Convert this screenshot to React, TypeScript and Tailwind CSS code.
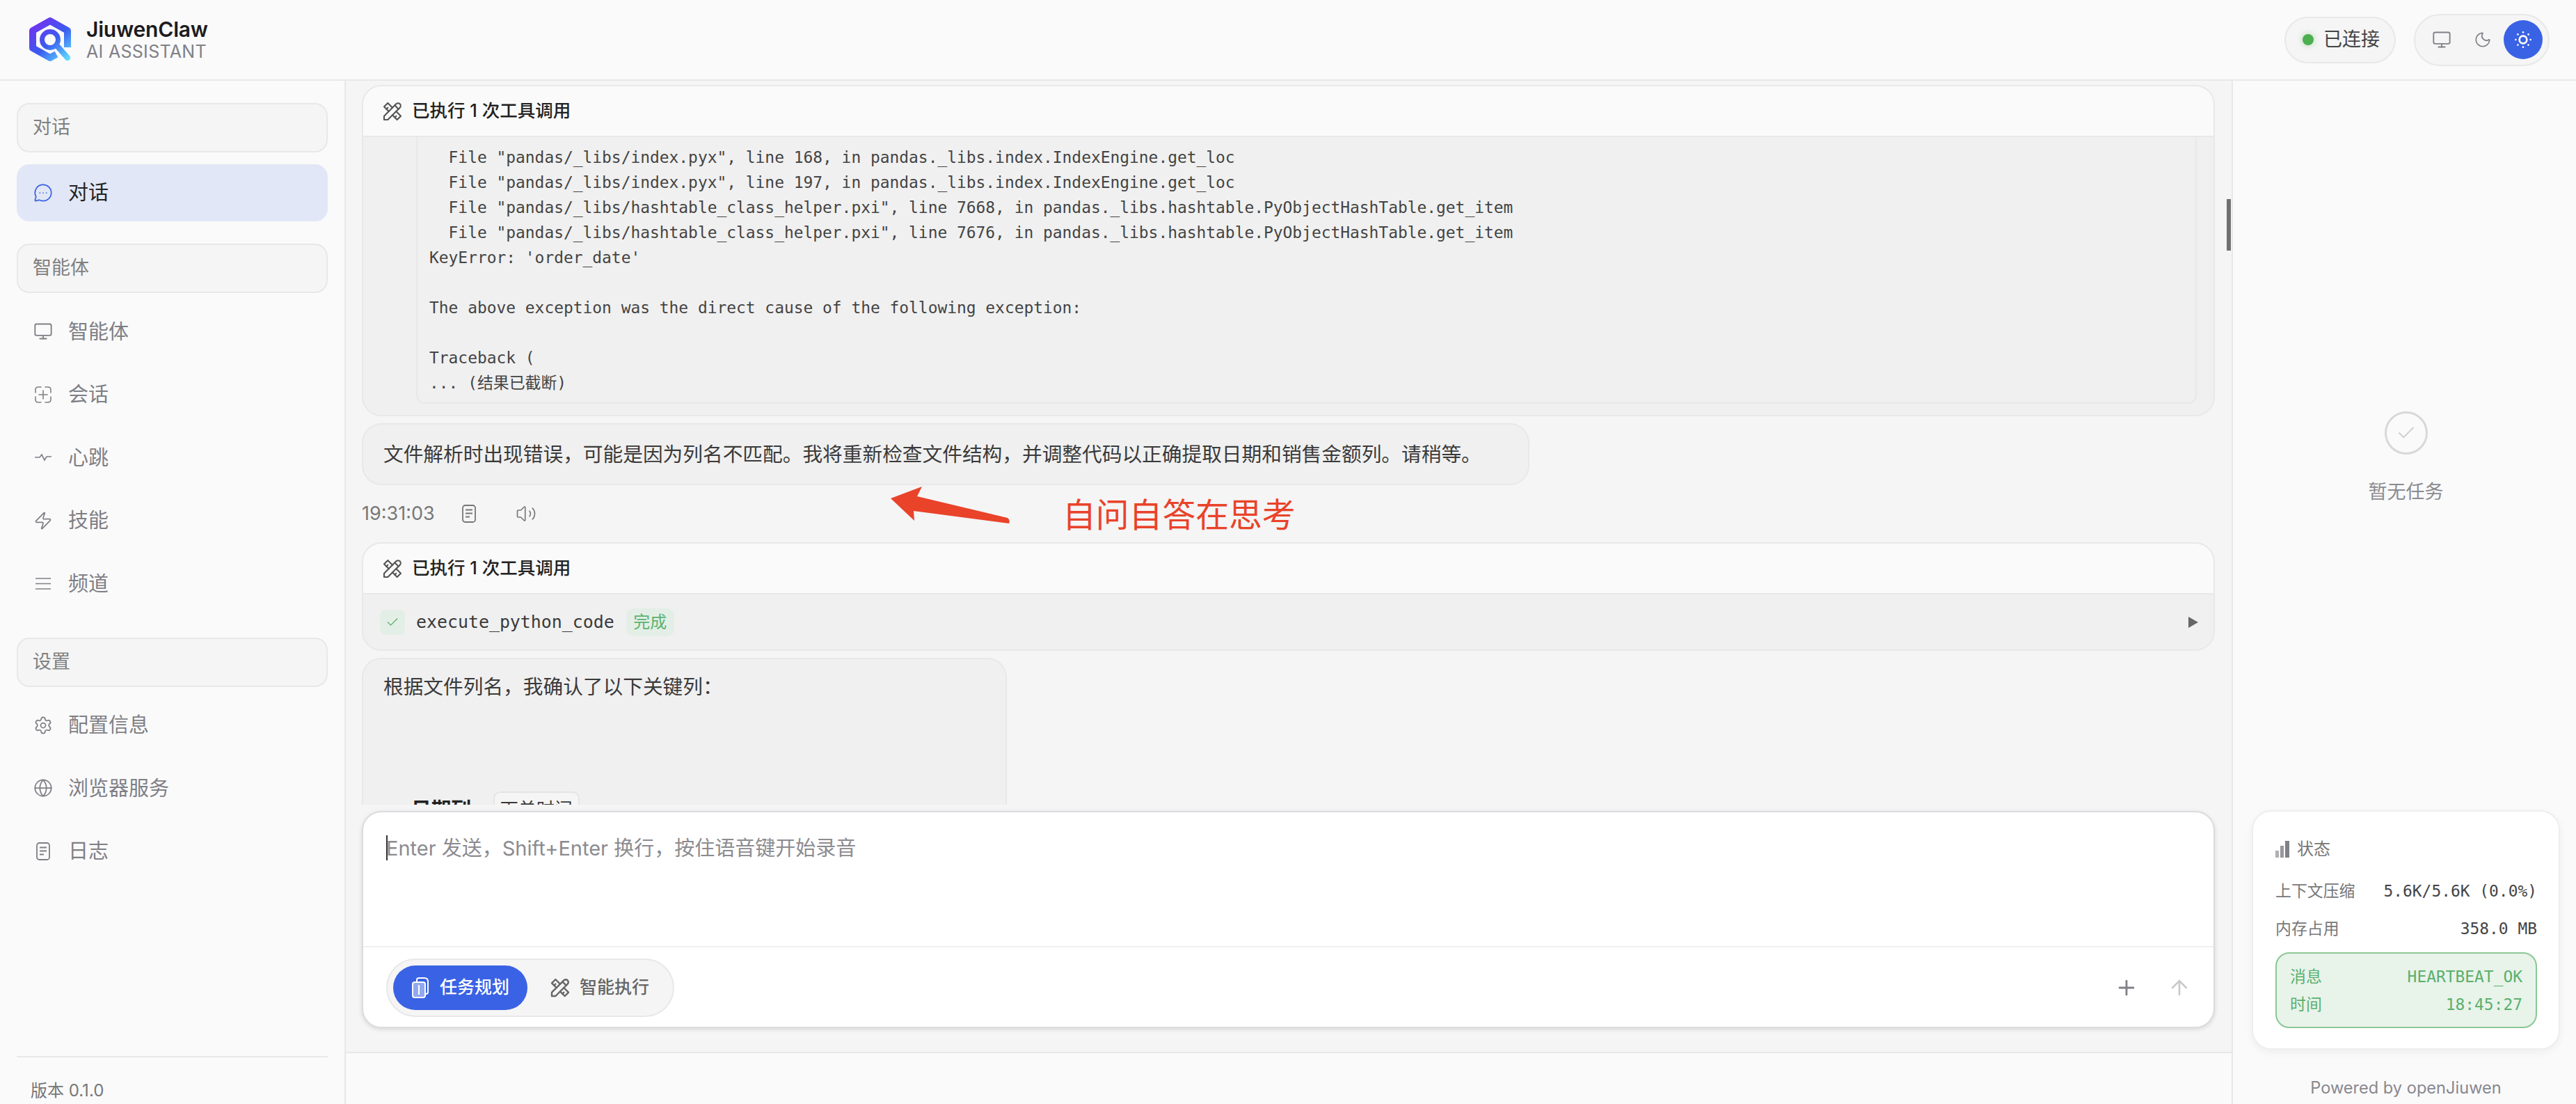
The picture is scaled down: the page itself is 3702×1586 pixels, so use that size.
import { useId } from 'react'
import { ArrowUp, Check, Globe, MessageCircleMore, Monitor, Moon, Plus, Settings, SunDim, Volume2, Zap } from 'lucide-react'
import { TbTools } from 'react-icons/tb'

const sans = 'font-[Inter,"Noto_Sans_CJK_SC",sans-serif]'
const mono = 'font-["DejaVu_Sans_Mono","Noto_Sans_CJK_SC",monospace]'

const traceback = [
  '  File "pandas/_libs/index.pyx", line 168, in pandas._libs.index.IndexEngine.get_loc',
  '  File "pandas/_libs/index.pyx", line 197, in pandas._libs.index.IndexEngine.get_loc',
  '  File "pandas/_libs/hashtable_class_helper.pxi", line 7668, in pandas._libs.hashtable.PyObjectHashTable.get_item',
  '  File "pandas/_libs/hashtable_class_helper.pxi", line 7676, in pandas._libs.hashtable.PyObjectHashTable.get_item',
  "KeyError: 'order_date'",
  '',
  'The above exception was the direct cause of the following exception:',
  '',
  'Traceback (',
  '... (结果已截断)',
]

const Logo = () => {
  const id = useId()
  return (
    <svg width="62" height="66" viewBox="-1 -1 62 66" fill="none">
      <defs>
        <linearGradient id={id} x1="6" y1="2" x2="56" y2="60" gradientUnits="userSpaceOnUse">
          <stop offset="0" stopColor="#7a2cf0" />
          <stop offset="0.55" stopColor="#3a5cf0" />
          <stop offset="1" stopColor="#5fdcff" />
        </linearGradient>
      </defs>
      <path
        d="M55 43 V19 L30 5 L5 19 V44 L30 58 L39 53"
        stroke={`url(#${id})`}
        strokeWidth="10"
        strokeLinejoin="round"
      />
      <path d="M41 42 L55 58" stroke={`url(#${id})`} strokeWidth="8" strokeLinecap="round" />
      <circle cx="30" cy="32" r="11.5" stroke={`url(#${id})`} strokeWidth="7" />
    </svg>
  )
}

const SessionIcon = () => (
  <svg width="28" height="28" viewBox="0 0 28 28" fill="none" stroke="currentColor" strokeWidth="1.6" strokeLinecap="round">
    <path d="M3 11 V7 Q3 3 7 3 H11" />
    <path d="M17 3 H21 Q25 3 25 7 V11" />
    <path d="M25 17 V21 Q25 25 21 25 H17" />
    <path d="M11 25 H7 Q3 25 3 21 V17" />
    <path d="M14 8 V20 M8 14 H20" />
  </svg>
)

const PulseIcon = () => (
  <svg width="28" height="28" viewBox="0 0 28 28" fill="none" stroke="currentColor" strokeWidth="1.7">
    <path d="M2 14 H9 L12 10 L16 18 L19 13 H26" />
  </svg>
)

const LinesIcon = () => (
  <svg width="28" height="28" viewBox="0 0 28 28" fill="none" stroke="currentColor" strokeWidth="1.7">
    <path d="M3 7 H25 M3 14.5 H25 M3 22 H25" />
  </svg>
)

const DocIcon = () => (
  <svg width="28" height="28" viewBox="0 0 28 28" fill="none" stroke="currentColor" strokeWidth="1.8">
    <rect x="5" y="2" width="18" height="24" rx="3.5" />
    <path d="M9 8.5 H19 M9 13.5 H19 M9 18.5 H15" />
  </svg>
)

const PlanIcon = () => (
  <svg width="28" height="32" viewBox="0 0 28 32" fill="none" stroke="currentColor" strokeWidth="2">
    <path d="M9 7 V5 Q9 2 12 2 H20 Q25 2 25 7 V22 Q25 25 22 25" />
    <rect x="3" y="8" width="18" height="22" rx="3" fill="rgba(255,255,255,0.45)" />
    <path d="M12 12 V26" />
  </svg>
)

const SectionLabel = ({ children }: { children: string }) => (
  <div className="flex h-[71px] items-center rounded-[18px] border-2 border-[#e8e8e8] bg-[#f5f5f5] px-[21px] text-[27px] text-[#808080]">
    {children}
  </div>
)

const NavItem = ({ icon, label, active }: { icon: React.ReactNode; label: string; active?: boolean }) => (
  <div
    className={
      active
        ? 'flex h-[82px] items-center gap-[22px] rounded-[18px] bg-[#e1e7f6] px-[24px] text-[29px] text-[#222222]'
        : 'flex h-[90.5px] items-center gap-[22px] px-[24px] text-[29px] text-[#7f7f86]'
    }
  >
    {icon}
    {label}
  </div>
)

const ToolHeader = () => (
  <div className="flex h-[73px] items-center gap-[12px] border-b-2 border-[#e8e8e8] bg-[#fafafa] px-[26px] text-[25.5px] font-medium text-[#222222]">
    <TbTools size={32} strokeWidth={1.6} className="text-[#555555]" />
    已执行 1 次工具调用
  </div>
)

const App = () => {
  return (
    <div className={`${sans} flex h-[1586px] w-[3702px] flex-col overflow-hidden bg-[#fafafa]`}>
      <header className="flex h-[116px] shrink-0 items-center border-b-2 border-[#e8e8e8] pl-[41px] pr-[38px]">
        <Logo />
        <div className="ml-[21px] mt-[-3px] flex flex-col">
          <span className="text-[30px] leading-[36px] font-semibold tracking-[-0.2px] text-[#1c1c1e]">JiuwenClaw</span>
          <span className="text-[25px] leading-[28px] tracking-[0.3px] text-[#808088]">AI ASSISTANT</span>
        </div>
        <div className="ml-auto flex items-center gap-[26px]">
          <div className="flex h-[67px] w-[160px] items-center gap-[14px] rounded-full border-2 border-[#e8e8e8] bg-[#f5f5f5] pl-[24px] text-[27px] text-[#444444]">
            <span className="h-[16px] w-[16px] rounded-full bg-[#4caf50] shadow-[0_0_10px_rgba(76,175,80,0.4)]" />
            已连接
          </div>
          <div className="flex h-[75px] w-[195px] items-center rounded-full border-2 border-[#e8e8e8] bg-[#f5f5f5] pl-[24px] pr-[8px]">
            <Monitor size={28} strokeWidth={1.6} className="text-[#808088]" />
            <Moon size={26} strokeWidth={1.6} className="ml-[32px] text-[#808088]" />
            <span className="ml-auto flex h-[56px] w-[56px] items-center justify-center rounded-full bg-[#3a62e4]">
              <SunDim size={32} strokeWidth={2} className="text-white" />
            </span>
          </div>
        </div>
      </header>

      <div className="flex min-h-0 flex-1">
        <aside className="flex w-[497px] shrink-0 flex-col border-r-2 border-[#e8e8e8] pt-[32px]">
          <div className="px-[24px]">
            <div className="flex flex-col gap-[17px]">
              <SectionLabel>对话</SectionLabel>
              <NavItem active label="对话" icon={<MessageCircleMore size={28} strokeWidth={1.5} className="text-[#3a62e4]" />} />
            </div>
            <div className="mt-[32px]">
              <SectionLabel>智能体</SectionLabel>
              <div className="mt-[10px] flex flex-col">
                <NavItem label="智能体" icon={<Monitor size={28} strokeWidth={1.6} />} />
                <NavItem label="会话" icon={<SessionIcon />} />
                <NavItem label="心跳" icon={<PulseIcon />} />
                <NavItem label="技能" icon={<Zap size={28} strokeWidth={1.5} />} />
                <NavItem label="频道" icon={<LinesIcon />} />
              </div>
            </div>
            <div className="mt-[32px]">
              <SectionLabel>设置</SectionLabel>
              <div className="mt-[10px] flex flex-col">
                <NavItem label="配置信息" icon={<Settings size={28} strokeWidth={1.5} />} />
                <NavItem label="浏览器服务" icon={<Globe size={28} strokeWidth={1.5} />} />
                <NavItem label="日志" icon={<DocIcon />} />
              </div>
            </div>
          </div>
          <div className="mx-[24px] mt-auto h-[69px] border-t-2 border-[#e8e8e8] pl-[20px] pt-[33px] text-[24px] leading-[30px] text-[#777777]">
            版本 0.1.0
          </div>
        </aside>

        <main className="relative flex min-w-0 flex-1 flex-col border-r-2 border-[#e8e8e8] bg-[#f5f5f5]">
          <div className="flex min-h-0 flex-1 flex-col overflow-hidden pl-[23px] pr-[24px] pt-[6px]">
            <div className="shrink-0 overflow-hidden rounded-[28px] border-2 border-[#e8e8e8] bg-[#f0f0f0]">
              <ToolHeader />
              <div className="mb-[16px] ml-[76px] mr-[24px] rounded-b-[12px] border-x-2 border-b-2 border-[#e8e8e8] pb-[10px] pl-[17px] pt-[11px]">
                <pre className={`${mono} text-[22.9px] leading-[36px] text-[#444444]`}>
                  {traceback.join('\n')}
                </pre>
              </div>
            </div>

            <div className="mt-[10px] flex h-[89px] w-[1678px] shrink-0 items-center rounded-[28px] border-2 border-[#e8e8e8] bg-[#f0f0f0] pl-[29px] text-[28.7px] text-[#3a3a3a]">
              文件解析时出现错误，可能是因为列名不匹配。我将重新检查文件结构，并调整代码以正确提取日期和销售金额列。请稍等。
            </div>

            <div className="mt-[19px] flex h-[44px] shrink-0 items-center text-[27px] text-[#777777]">
              19:31:03
              <span className="ml-[35px]">
                <DocIcon />
              </span>
              <Volume2 size={30} strokeWidth={1.3} className="ml-[53px] text-[#777777]" />
            </div>

            <div className="mt-[19px] shrink-0 overflow-hidden rounded-[28px] border-2 border-[#e8e8e8] bg-[#f0f0f0]">
              <ToolHeader />
              <div className="flex h-[79px] items-center pl-[24px] pr-[22px]">
                <span className="flex h-[36px] w-[36px] items-center justify-center rounded-[8px] bg-[#e3efe6]">
                  <Check size={20} strokeWidth={1.5} className="text-[#56ad68]" />
                </span>
                <span className={`${mono} ml-[16px] text-[24.9px] text-[#3a3a3a]`}>execute_python_code</span>
                <span className="ml-[17px] flex h-[40px] w-[69px] items-center justify-center rounded-[10px] bg-[#e3efe6] text-[24px] text-[#5cb270]">
                  完成
                </span>
                <span className="ml-auto h-0 w-0 border-y-[8px] border-l-[14px] border-y-transparent border-l-[#666666]" />
              </div>
            </div>

            <div className="mt-[10px] h-[300px] w-[927px] shrink-0 rounded-t-[28px] border-2 border-[#e8e8e8] bg-[#f0f0f0] pl-[29px] pt-[20px] text-[28.7px] leading-[40px] text-[#3a3a3a]">
              根据文件列名，我确认了以下关键列：
              <div className="ml-[40px] mt-[130px] flex items-center">
                <b className="font-bold text-[#222222]">日期列:</b>
                <span className="ml-[22px] rounded-[10px] border-2 border-[#e4e4e4] bg-[#f5f5f5] px-[8px] text-[26px] leading-[48px]">下单时间</span>
              </div>
            </div>
          </div>

          <div className="shrink-0 pb-[34px] pl-[23px] pr-[24px] pt-[9px]">
            <div className="h-[312px] overflow-hidden rounded-[28px] border-2 border-[#dcdce0] bg-white shadow-[0_2px_6px_rgba(0,0,0,0.12)]">
              <div className="relative h-[192px] pl-[33px] pt-[33px] text-[29px] leading-[38px] text-[#8b8b90]">
                <span className="absolute left-[33px] top-[33px] h-[36px] w-[2px] bg-[#333333]" />
                Enter 发送，Shift+Enter 换行，按住语音键开始录音
              </div>
              <div className="flex h-[118px] items-center border-t-2 border-[#f0f0f0] pl-[33px] pr-[32px]">
                <div className="flex h-[84px] w-[414px] items-center rounded-full border-2 border-[#e8e8e8] bg-[#f5f5f5] pl-[8px]">
                  <div className="flex h-[64px] w-[193px] items-center gap-[14px] rounded-full bg-[#3a62e4] pl-[25px] text-[25px] font-medium text-white">
                    <PlanIcon />
                    任务规划
                  </div>
                  <div className="ml-[31px] flex items-center gap-[12px] text-[25px] font-medium text-[#666666]">
                    <TbTools size={32} strokeWidth={1.8} />
                    智能执行
                  </div>
                </div>
                <Plus size={34} strokeWidth={2} className="ml-auto text-[#808088]" />
                <ArrowUp size={34} strokeWidth={1.8} className="ml-[42px] text-[#c8c8cc]" />
              </div>
            </div>
          </div>

          <div className="h-[75px] shrink-0 border-t-2 border-[#e8e8e8] bg-[#fafafa]" />

          <span className="absolute right-[1px] top-[170px] h-[74px] w-[6px] bg-[#707070]" />
        </main>

        <aside className="flex w-[493px] shrink-0 flex-col bg-[#fafafa] pl-[27px] pr-[23px]">
          <div className="flex flex-1 flex-col items-center pt-[475px]">
            <span className="flex h-[62px] w-[62px] items-center justify-center rounded-full border-[3px] border-[#d8d8d8]">
              <Check size={30} strokeWidth={1.5} className="text-[#cfcfcf]" />
            </span>
            <span className="mt-[34px] text-[27px] text-[#8b8b90]">暂无任务</span>
          </div>
          <div className="h-[344px] shrink-0 rounded-[28px] border-2 border-[#eeeeee] bg-white pl-[32px] pr-[31px] pt-[36px] shadow-[0_4px_12px_rgba(0,0,0,0.05)]">
            <div className="flex items-center gap-[11px] text-[24px] text-[#777777]">
              <span className="flex h-[24px] items-end gap-[2px]">
                <i className="h-[10px] w-[5px] bg-[#b0b0b4]" />
                <i className="h-[17px] w-[5px] bg-[#98989c]" />
                <i className="h-[24px] w-[6px] bg-[#808088]" />
              </span>
              状态
            </div>
            <div className="mt-[26px] flex items-center justify-between text-[22.9px] leading-[32px] text-[#777777]">
              上下文压缩
              <span className={`${mono} text-[#444444]`}>5.6K/5.6K (0.0%)</span>
            </div>
            <div className="mt-[22px] flex items-center justify-between text-[22.9px] leading-[32px] text-[#777777]">
              内存占用
              <span className={`${mono} text-[#444444]`}>358.0 MB</span>
            </div>
            <div className="mt-[18px] flex h-[109px] flex-col justify-center gap-[10px] rounded-[20px] border-2 border-[#8cc796] bg-[#e8f3ea] px-[19px] text-[22.9px] leading-[30px] text-[#5ab06e]">
              <div className="flex justify-between">
                消息
                <span className={mono}>HEARTBEAT_OK</span>
              </div>
              <div className="flex justify-between">
                时间
                <span className={mono}>18:45:27</span>
              </div>
            </div>
          </div>
          <div className="h-[78px] shrink-0 pt-[36px] text-center text-[23.6px] leading-[37px] text-[#888890]">
            Powered by openJiuwen
          </div>
        </aside>
      </div>

      <div className="absolute left-[1278px] top-[697px]">
        <svg width="176" height="58" viewBox="0 0 176 58" className="text-[#e9432a]">
          <path d="M2 19 L47 2 L40 16 L170 47 Q174 50 172 55 L35 37 L36 51 Z" fill="currentColor" />
        </svg>
      </div>
      <div className="absolute left-[1527px] top-[708px] text-[47.8px] leading-[64px] text-[#e9432a]">自问自答在思考</div>
    </div>
  )
}

export default App
